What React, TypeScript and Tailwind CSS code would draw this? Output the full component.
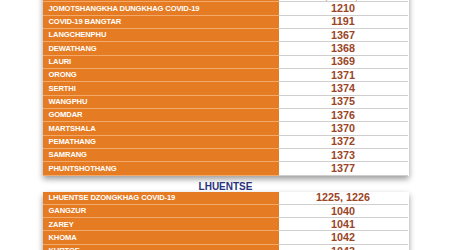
import React from "react";

type Row = { name: string; code: string };

const ranglung: Row[] = [
  { name: "RANGJUNG COVID-19", code: "1203, 1204, 1205" },
  { name: "JOMOTSHANGKHA DUNGKHAG COVID-19", code: "1210" },
  { name: "COVID-19 BANGTAR", code: "1191" },
  { name: "LANGCHENPHU", code: "1367" },
  { name: "DEWATHANG", code: "1368" },
  { name: "LAURI", code: "1369" },
  { name: "ORONG", code: "1371" },
  { name: "SERTHI", code: "1374" },
  { name: "WANGPHU", code: "1375" },
  { name: "GOMDAR", code: "1376" },
  { name: "MARTSHALA", code: "1370" },
  { name: "PEMATHANG", code: "1372" },
  { name: "SAMRANG", code: "1373" },
  { name: "PHUNTSHOTHANG", code: "1377" },
];

const lhuentse: Row[] = [
  { name: "LHUENTSE DZONGKHAG COVID-19", code: "1225, 1226" },
  { name: "GANGZUR", code: "1040" },
  { name: "ZAREY", code: "1041" },
  { name: "KHOMA", code: "1042" },
  { name: "KURTOE", code: "1043" },
  { name: "MENBI", code: "1044" },
];

function Table({ rows }: { rows: Row[] }) {
  return (
    <div className="w-[366px] mx-auto bg-white shadow-[0_3px_6px_rgba(0,0,0,0.4)]">
      {rows.map((r, i) => (
        <div key={i} className="flex h-[13.34px]">
          <div className="w-[236px] bg-[#e57c24] border-b border-[#f2a96a] flex items-center pl-[6px]">
            <span className="text-[7.6px] font-bold text-white leading-none uppercase tracking-[-0.12px]">{r.name}</span>
          </div>
          <div className="flex-1 border-b border-[#cfcfcf] flex items-center justify-center mr-[1px]">
            <span className="text-[10.8px] font-bold text-[#9a4526] leading-none">{r.code}</span>
          </div>
        </div>
      ))}
    </div>
  );
}

export default function App() {
  return (
    <div
      className="h-[250px] w-[450px] overflow-hidden bg-white"
      style={{ fontFamily: '"Liberation Sans", Arial, sans-serif' }}
    >
      <div className="-mt-[11.1px] pl-[1px]">
        <Table rows={ranglung} />
        <div className="pt-[6px] h-[16px] text-center">
          <p className="text-[10px] font-bold text-[#28337c] leading-[10px]">LHUENTSE</p>
        </div>
        <Table rows={lhuentse} />
      </div>
    </div>
  );
}
